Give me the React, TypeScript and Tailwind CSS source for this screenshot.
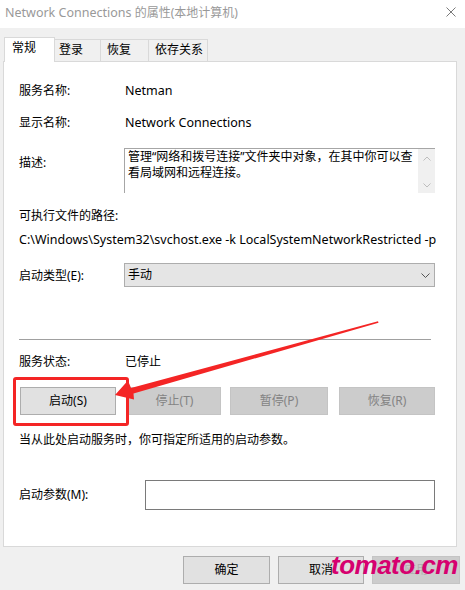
import React from "react";

const Btn = ({ label, w, ml, disabled }: { label: string; w: string; ml: string; disabled?: boolean }) => (
  <div
    className={`${w} ${ml} h-[28px] flex items-center justify-center border ${
      disabled ? "bg-[#cccccc] border-[#c4c4c4] text-[#838383]" : "bg-[#e1e1e1] border-[#adadad] text-black"
    }`}
  >
    {label}
  </div>
);

export default function App() {
  return (
    <div className="relative w-[465px] h-[590px] overflow-hidden bg-[#f0f0f0] text-[12px] text-black font-['Noto_Sans','Noto_Sans_CJK_SC',sans-serif]">
      {/* Title bar */}
      <div className="h-[28px] bg-white flex justify-between">
        <div className="pl-[5px] pt-[5px] leading-[16px] text-[#999999]">
          <span className="text-[12.5px]">Network Connections</span> 的属性(本地计算机)
        </div>
        <svg className="mt-[7px] mr-[9px]" width="10" height="10" viewBox="0 0 10 10">
          <path d="M0.5 0.5 L9.5 9.5 M9.5 0.5 L0.5 9.5" stroke="#7a7a7a" strokeWidth="1" fill="none" />
        </svg>
      </div>

      <div className="pl-[3px] pr-[8px] pt-[9px]">
        {/* Tabs */}
        <div className="relative z-10 flex items-end h-[25px] -mb-[1px]">
          <div className="ml-[1px] w-[51px] h-[25px] bg-white border-l border-t border-r border-[#d9d9d9] pl-[7px] pt-[2px] leading-[16px]">
            常规
          </div>
          <div className="w-[46px] h-[22px] mb-[1px] bg-[#f0f0f0] border-t border-r border-[#d9d9d9] pl-[4px] pt-[2px] leading-[16px]">
            登录
          </div>
          <div className="w-[48px] h-[22px] mb-[1px] bg-[#f0f0f0] border-t border-r border-[#d9d9d9] pl-[6px] pt-[2px] leading-[16px]">
            恢复
          </div>
          <div className="w-[59px] h-[22px] mb-[1px] bg-[#f0f0f0] border-t border-r border-[#d9d9d9] pl-[6px] pt-[2px] leading-[16px]">
            依存关系
          </div>
        </div>

        {/* Panel */}
        <div className="h-[486px] bg-white border border-[#d9d9d9] pl-[15px] pr-[20px] flex flex-col">
          <div className="mt-[19px] h-[20px] leading-[20px] flex">
            <div className="w-[106px]">服务名称:</div>
            <div className="text-[12.5px]">Netman</div>
          </div>
          <div className="mt-[12px] h-[20px] leading-[20px] flex">
            <div className="w-[106px]">显示名称:</div>
            <div className="text-[12.5px]">Network Connections</div>
          </div>
          <div className="mt-[15px] flex">
            <div className="w-[105px] pt-[5px] leading-[20px]">描述:</div>
            <div className="w-[311px] h-[45px] border-t border-l border-[#a6a6a6] flex">
              <div className="flex-1 pl-[3px] leading-[16px] whitespace-nowrap overflow-hidden">
                管理“网络和拨号连接”文件夹中对象，在其中你可以查
                <br />
                看局域网和远程连接。
              </div>
              <div className="w-[17px] bg-[#f0f0f0] flex flex-col justify-between items-center pt-[7px] pb-[5px]">
                <svg width="8" height="5" viewBox="0 0 8 5">
                  <path d="M0.5 4.5 L4 1 L7.5 4.5" stroke="#bdbdbd" strokeWidth="1" fill="none" />
                </svg>
                <svg width="8" height="5" viewBox="0 0 8 5">
                  <path d="M0.5 0.5 L4 4 L7.5 0.5" stroke="#bdbdbd" strokeWidth="1" fill="none" />
                </svg>
              </div>
            </div>
          </div>
          <div className="mt-[13px] h-[20px] leading-[20px]">可执行文件的路径:</div>
          <div className="mt-[4px] h-[20px] leading-[20px] text-[12.5px] whitespace-nowrap overflow-hidden">
            C:\Windows\System32\svchost.exe -k LocalSystemNetworkRestricted -p
          </div>
          <div className="mt-[13px] h-[24px] flex">
            <div className="w-[105px] leading-[24px] pt-[1px]">启动类型(E):</div>
            <div className="w-[311px] h-[24px] bg-[#e5e5e5] border border-[#adadad] flex items-center justify-between pl-[3px] pr-[4px]">
              <span className="leading-[16px]">手动</span>
              <svg width="9" height="5" viewBox="0 0 9 5">
                <path d="M0.5 0.5 L4.5 4.5 L8.5 0.5" stroke="#555555" strokeWidth="1" fill="none" />
              </svg>
            </div>
          </div>
          <div className="mt-[52px] h-px w-[412px] bg-[#a0a0a0]" />
          <div className="mt-[12px] h-[20px] leading-[20px] flex">
            <div className="w-[106px]">服务状态:</div>
            <div>已停止</div>
          </div>
          <div className="mt-[15px] flex">
            <Btn label="启动(S)" w="w-[96px]" ml="ml-[1px]" />
            <Btn label="停止(T)" w="w-[93px]" ml="ml-[12px]" disabled />
            <Btn label="暂停(P)" w="w-[98px]" ml="ml-[9px]" disabled />
            <Btn label="恢复(R)" w="w-[96px]" ml="ml-[11px]" disabled />
          </div>
          <div className="mt-[15px] h-[20px] leading-[20px]">当从此处启动服务时，你可指定所适用的启动参数。</div>
          <div className="mt-[30px] flex items-center">
            <div className="w-[126px]">启动参数(M):</div>
            <div className="w-[290px] h-[30px] border border-[#7a7a7a] bg-white" />
          </div>
        </div>

        {/* Bottom buttons */}
        <div className="mt-[9px] flex justify-end">
          <div className="w-[87px] h-[28px] bg-[#e1e1e1] border border-[#adadad] flex items-center justify-center">确定</div>
          <div className="ml-[8px] w-[86px] h-[28px] bg-[#e1e1e1] border border-[#adadad] flex items-center justify-center">取消</div>
          <div className="ml-[8px] mr-[-3px] w-[88px] h-[28px] bg-[#cccccc] border border-[#c4c4c4] text-[#b0b0b0] flex items-center justify-center">应用</div>
        </div>
      </div>

      {/* Red highlight rectangle */}
      <div className="absolute left-[13px] top-[377px] w-[116px] h-[49px] border-[3px] border-[#f42525] rounded-[3px] pointer-events-none" />

      {/* Red arrow */}
      <svg className="absolute left-0 top-0 pointer-events-none" width="465" height="590" viewBox="0 0 465 590">
        <polygon
          points="115,395 128,380.5 131,388 378,321.3 378.5,322.7 133.5,393.5 134,399.5"
          fill="#f42525"
        />
      </svg>

      {/* Watermark */}
      <div className="absolute left-[331px] top-[552px] text-[26px] leading-none font-bold italic text-[#d6006f] font-['Liberation_Sans',sans-serif] tracking-[-0.5px]">
        tomato.cm
      </div>
    </div>
  );
}
